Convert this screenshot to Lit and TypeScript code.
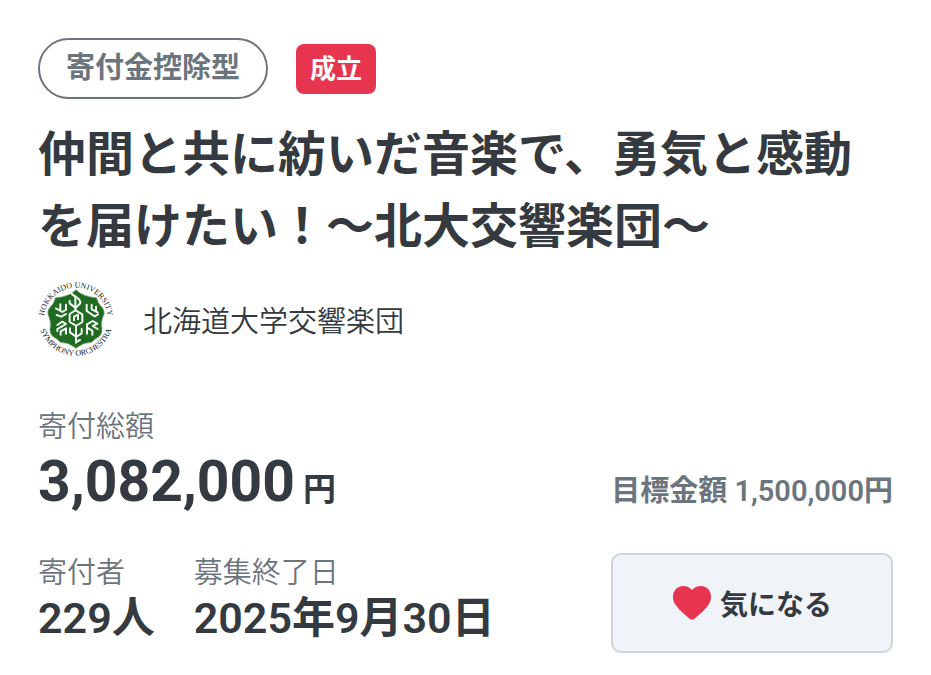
import { LitElement, html, css } from "lit";
import { customElement, property, state } from "lit/decorators.js";

@customElement("orchestra-logo")
class OrchestraLogo extends LitElement {
  static styles = css`
    :host { display: block; width: 76px; height: 76px; flex: none; }
    .logo { display: block; width: 100%; height: 100%; overflow: visible; }
    .ring { font: 400 24px "Liberation Serif", serif; fill: #242429; text-anchor: middle; }
    .shield { fill: #1f6b22; stroke: #8aa88c; stroke-width: 2; }
    .crest { fill: none; stroke: #f4faf4; stroke-width: 6; stroke-linejoin: round; stroke-linecap: round; }
  `;

  render() {
    return html`
      <svg class="logo" viewBox="24 26 228 228" role="img" aria-label="Hokkaido University Symphony Orchestra">
        <defs>
          <path id="upper" d="M42 142 A96 96 0 0 1 234 142" />
          <path id="lower" d="M26 138 A112 112 0 0 0 250 138" />
        </defs>
        <path class="shield" d="M138 52 Q158 73 200 76 Q203 92 216 105 Q225 115 222 126 Q211 150 216 170 Q218 183 207 193 Q196 198 185 210 Q160 210 138 228 Q116 210 91 210 Q80 198 69 193 Q58 183 60 170 Q65 150 54 126 Q51 115 60 105 Q73 92 76 76 Q118 73 138 52Z" />
        <g class="crest">
          <path d="M124 64 L136 73 V114 L119 125 V149 L138 160 V211" />
          <path d="M136 73 Q152 82 151 93 L137 106 M119 86 V93 L136 106" />
          <path d="M137 114 L157 126 V149 L138 161 M132 144 V133 L144 127 V141" />
          <path d="M137 192 L120 180 V168 M138 194 L155 183 V170 M138 209 L150 203" />
          <path d="M78 108 L97 119 L108 112 V97 M91 96 V112 M80 128 L94 133 L108 125" />
          <path d="M170 97 V116 L194 132 L204 126 M185 97 V111 L203 120 M198 103 V115" />
          <path d="M82 158 L97 148 L108 155 L96 162 L82 170 V176 M92 187 V177 L108 168 V184" />
          <path d="M203 170 L188 161 L202 154 L188 146 L171 156 V184 M171 166 L187 175 V187" />
        </g>
        <text class="ring"><textPath href="#upper" startOffset="50%">HOKKAIDO UNIVERSITY</textPath></text>
        <text class="ring"><textPath href="#lower" startOffset="50%">SYMPHONY ORCHESTRA</textPath></text>
      </svg>
    `;
  }
}

@customElement("stat-item")
class StatItem extends LitElement {
  @property() label = "";
  @property() value = "";

  static styles = css`
    :host { display: block; }
    .stat { margin: 0; }
    .label { font-size: 29px; line-height: 40px; color: #6c757d; font-weight: 350; }
    .value { margin: 0; font-size: 43px; line-height: 50px; font-weight: 600; color: #343a40; white-space: nowrap; }
  `;

  render() {
    return html`
      <dl class="stat">
        <dt class="label">${this.label}</dt>
        <dd class="value">${this.value}</dd>
      </dl>
    `;
  }
}

@customElement("app-root")
class AppRoot extends LitElement {
  @state() private liked = true;

  static styles = css`
    :host {
      display: block;
      box-sizing: border-box;
      min-height: 100vh;
      padding: 38px 38px 20px;
      background: #fff;
      color: #343a40;
      font-family: Roboto, "Noto Sans CJK JP", sans-serif;
    }
    .row { display: flex; align-items: center; }
    .tags { gap: 28px; }
    .type {
      box-sizing: border-box;
      padding: 0 26px;
      border: 2px solid #6c757d;
      border-radius: 31px;
      font-size: 29px;
      line-height: 57px;
      font-weight: 700;
      color: #6c757d;
    }
    .status {
      padding: 0 14px;
      border-radius: 8px;
      background: #e73550;
      color: #fff;
      font-size: 26px;
      line-height: 50px;
      font-weight: 700;
    }
    .title { margin: 20px 0 18px; font-size: 48px; line-height: 72px; font-weight: 700; }
    .owner { gap: 29px; color: #343a40; text-decoration: none; font-size: 29px; line-height: 40px; font-weight: 350; }
    .name { padding-top: 6px; }
    .label { margin: 50px 0 0; font-size: 29px; line-height: 40px; color: #6c757d; font-weight: 350; }
    .split { display: flex; justify-content: space-between; }
    .money { align-items: baseline; }
    .total { margin: 0; font-size: 57px; line-height: 70px; font-weight: 700; }
    .unit { margin-left: 8px; font-size: 33px; }
    .goal { margin: 0; font-size: 29px; font-weight: 600; color: #6c757d; }
    .bottom { margin-top: 28px; align-items: flex-start; }
    .stats { display: flex; gap: 39px; }
    .like {
      display: flex;
      align-items: center;
      justify-content: center;
      gap: 8px;
      flex: 0 1 282px;
      height: 100px;
      border: 2px solid #ced4da;
      border-radius: 10px;
      background: #f0f4f9;
      color: #343a40;
      font: inherit;
      font-size: 28px;
      font-weight: 700;
    }
    .heart { width: 40px; height: 36px; fill: #e73550; }
    .heart.off { fill: #adb5bd; }
  `;

  render() {
    return html`
      <main>
        <div class="row tags">
          <span class="type">寄付金控除型</span>
          <span class="status">成立</span>
        </div>
        <h1 class="title">仲間と共に紡いだ音楽で、勇気と感動を届けたい！〜北大交響楽団〜</h1>
        <a class="row owner" href="#owner">
          <orchestra-logo></orchestra-logo>
          <span class="name">北海道大学交響楽団</span>
        </a>
        <p class="label">寄付総額</p>
        <div class="split money">
          <p class="total">3,082,000<span class="unit">円</span></p>
          <p class="goal">目標金額 1,500,000円</p>
        </div>
        <div class="split bottom">
          <div class="stats">
            <stat-item label="寄付者" value="229人"></stat-item>
            <stat-item label="募集終了日" value="2025年9月30日"></stat-item>
          </div>
          <button class="like" type="button" aria-pressed=${this.liked} @click=${() => (this.liked = !this.liked)}>
            <svg class="heart ${this.liked ? "" : "off"}" viewBox="0 0 40 36" aria-hidden="true">
              <path d="M20 5 C24 0 31 0 35 3 C40 7 40 14 37 19 C34 24 28 29 22 34 Q20 35.600 18 34 C12 29 6 24 3 19 C0 14 0 7 5 3 C9 0 16 0 20 5Z" />
            </svg>
            <span>気になる</span>
          </button>
        </div>
      </main>
    `;
  }
}
